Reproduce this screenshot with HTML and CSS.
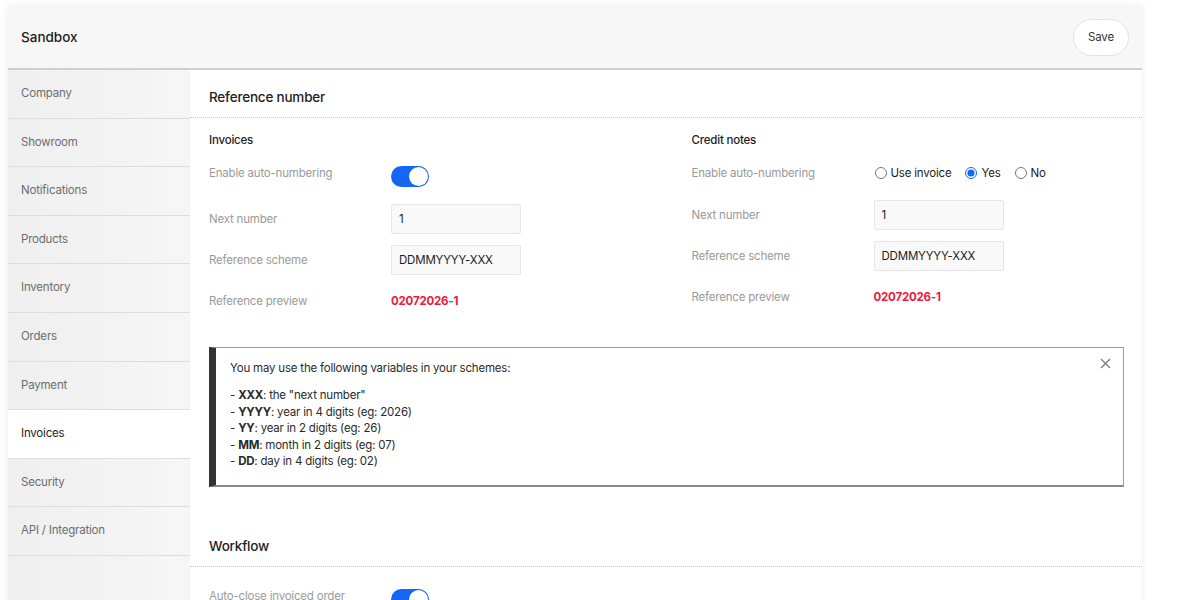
FILE: index.html
```html
<!DOCTYPE html>
<html lang="en">
<head>
    <meta charset="UTF-8">
    <title>Sandbox - Invoices</title>
    <link rel="stylesheet" href="styles.css">
</head>
<body>
    <div class="panel">
        <div class="topbar">
            <span class="title">Sandbox</span>
            <button class="btn-save">Save</button>
        </div>
        <div class="layout">
            <ul class="sidebar">
                <li>Company</li>
                <li>Showroom</li>
                <li>Notifications</li>
                <li>Products</li>
                <li>Inventory</li>
                <li>Orders</li>
                <li>Payment</li>
                <li class="active">Invoices</li>
                <li>Security</li>
                <li>API / Integration</li>
            </ul>
            <div class="main">
                <h2 class="section-head">Reference number</h2>
                <div class="section-body">
                    <div class="columns">
                        <div class="col">
                            <h3>Invoices</h3>
                            <div class="row row-switch">
                                <span class="label">Enable auto-numbering</span>
                                <span class="switch"><span class="knob"></span></span>
                            </div>
                            <div class="row">
                                <span class="label">Next number</span>
                                <input class="field" type="text" value="1">
                            </div>
                            <div class="row">
                                <span class="label">Reference scheme</span>
                                <input class="field" type="text" value="DDMMYYYY-XXX">
                            </div>
                            <div class="row">
                                <span class="label">Reference preview</span>
                                <span class="preview">02072026<i>-</i>1</span>
                            </div>
                        </div>
                        <div class="col">
                            <h3>Credit notes</h3>
                            <div class="row row-radio">
                                <span class="label">Enable auto-numbering</span>
                                <span class="radios">
                                    <label><input type="radio" name="cn"> Use invoice</label>
                                    <label><input type="radio" name="cn" checked> Yes</label>
                                    <label><input type="radio" name="cn"> No</label>
                                </span>
                            </div>
                            <div class="row">
                                <span class="label">Next number</span>
                                <input class="field" type="text" value="1">
                            </div>
                            <div class="row">
                                <span class="label">Reference scheme</span>
                                <input class="field" type="text" value="DDMMYYYY-XXX">
                            </div>
                            <div class="row">
                                <span class="label">Reference preview</span>
                                <span class="preview">02072026<i>-</i>1</span>
                            </div>
                        </div>
                    </div>

                    <div class="notice">
                        <span class="close">
                            <svg width="11" height="11" viewBox="0 0 11 11"><path d="M1 1L10 10M10 1L1 10" stroke="#777" stroke-width="1.2" fill="none"/></svg>
                        </span>
                        <p>You may use the following variables in your schemes:</p>
                        <ul>
                            <li>- <b>XXX</b>: the "next number"</li>
                            <li>- <b>YYYY</b>: year in 4 digits (eg: 2026)</li>
                            <li>- <b>YY</b>: year in 2 digits (eg: 26)</li>
                            <li>- <b>MM</b>: month in 2 digits (eg: 07)</li>
                            <li>- <b>DD</b>: day in 4 digits (eg: 02)</li>
                        </ul>
                    </div>
                </div>

                <h2 class="section-head">Workflow</h2>
                <div class="section-body workflow">
                    <div class="row row-switch">
                        <span class="label">Auto-close invoiced order</span>
                        <span class="switch"><span class="knob"></span></span>
                    </div>
                </div>
            </div>
        </div>
    </div>
</body>
</html>
```

FILE: styles.css
```css
/* Base */
body {
    margin: 0;
    background: #fff;
    font-family: 'Inter', 'Noto Sans', sans-serif;
    font-size: 11.5px;
    letter-spacing: -0.2px;
    color: #222;
    overflow: hidden;
}

.panel {
    margin: 6px 0 0 8px;
    width: 1134px;
    background: #fff;
    box-shadow: 0 0 8px rgba(0, 0, 0, 0.08);
}

/* Barra superior */
.topbar {
    height: 62px;
    display: flex;
    align-items: center;
    justify-content: space-between;
    padding: 0 13px;
    background: #f7f7f7;
    border-bottom: 2px solid #cfcfcf;
}

.title {
    font-size: 13.5px;
    font-weight: 500;
    letter-spacing: 0;
    color: #1d1d1d;
}

.btn-save {
    width: 56px;
    height: 37px;
    border-radius: 19px;
    border: 1px solid #e2e2e2;
    background: #fff;
    font-family: inherit;
    font-size: 11.5px;
    letter-spacing: -0.1px;
    color: #333;
    cursor: pointer;
}

.layout {
    display: flex;
    min-height: 600px;
}

/* Menu lateral */
.sidebar {
    width: 182px;
    margin: 0;
    padding: 0;
    list-style: none;
    background: linear-gradient(to right, #efefef, #f6f6f6);
}

.sidebar li {
    height: 47.6px;
    line-height: 46px;
    padding-left: 13px;
    border-bottom: 1px solid #dedede;
    color: #6d6d6d;
}

.sidebar li.active {
    background: #fff;
    color: #1d1d1d;
}

.main {
    flex: 1;
}

.section-head {
    margin: 0;
    padding: 18px 19px 11px;
    line-height: 18px;
    font-size: 13.5px;
    font-weight: 500;
    color: #1d1d1d;
    border-bottom: 1px dotted #c8c8c8;
}

.section-body {
    padding: 13px 18px 32px 19px;
}

.columns {
    display: grid;
    grid-template-columns: 1fr 1fr;
    column-gap: 50px;
}

.col h3 {
    margin: 0 0 15px;
    line-height: 18px;
    font-size: 11.5px;
    font-weight: 500;
    color: #1d1d1d;
}

/* Filas del formulario */
.row {
    display: flex;
    align-items: center;
    min-height: 30px;
    margin-bottom: 11px;
}

.row:last-child {
    margin-bottom: 0;
}

.row-switch {
    align-items: flex-start;
    min-height: 29px;
}

.row-radio {
    align-items: flex-start;
    min-height: 25px;
}

.label {
    width: 182px;
    flex-shrink: 0;
    line-height: 18px;
    color: #9a9a9a;
}

.switch {
    position: relative;
    margin-top: 2px;
    width: 38px;
    height: 21px;
    border-radius: 11px;
    background: #1467f5;
}

.knob {
    position: absolute;
    top: 1px;
    right: 1px;
    width: 19px;
    height: 19px;
    border-radius: 50%;
    background: #fff;
    box-shadow: 0 0 1px rgba(0, 0, 0, 0.3);
}

.field {
    box-sizing: border-box;
    width: 130px;
    height: 30px;
    padding: 0 7px;
    border: 1px solid #e6e6e6;
    border-radius: 2px;
    background: #f9f9f9;
    font-family: inherit;
    font-size: 11.5px;
    letter-spacing: -0.2px;
    color: #1d1d1d;
}

.preview {
    font-weight: 700;
    color: #e8203a;
}

.preview i {
    font-style: normal;
    color: #2a6ef0;
}

.radios {
    display: flex;
    gap: 13px;
    line-height: 18px;
    color: #1d1d1d;
}

.radios label {
    display: flex;
    align-items: center;
    gap: 4px;
}

.radios input {
    margin: 0 0 0 1px;
    width: 12px;
    height: 12px;
    accent-color: #1467f5;
}

/* Caja de ayuda */
.notice {
    position: relative;
    margin-top: 31px;
    padding: 12px 14px 15px 14px;
    border: 1px solid #9c9c9c;
    border-bottom: 2px solid #8a8a8a;
    border-left: 7px solid #333;
    color: #2a2a2a;
}

.notice p {
    margin: 0 0 10px;
    line-height: 17px;
}

.notice ul {
    margin: 0;
    padding: 0;
    list-style: none;
}

.notice li {
    line-height: 16.5px;
}

.notice b {
    font-weight: 700;
}

.close {
    position: absolute;
    top: 10px;
    right: 12px;
}

.workflow {
    padding-top: 20px;
}
```
